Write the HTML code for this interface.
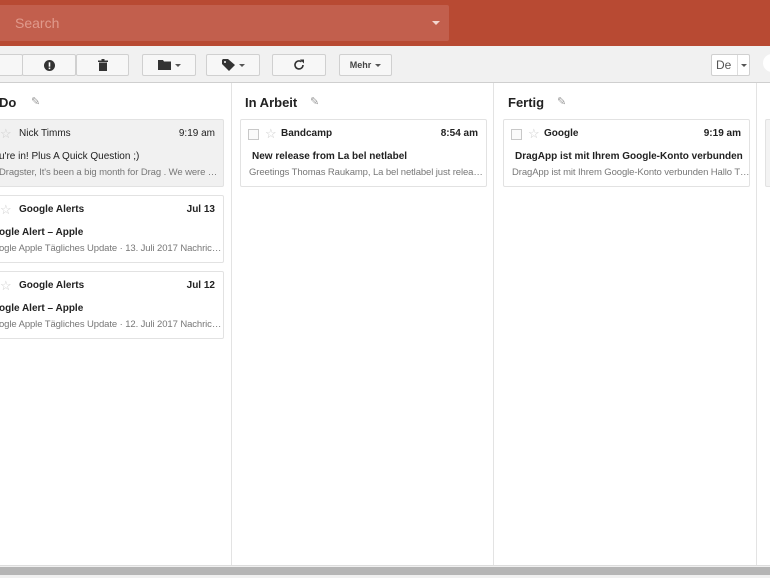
<!DOCTYPE html>
<html><head><style>
*{box-sizing:border-box;margin:0;padding:0}
body{width:770px;height:578px;overflow:hidden;background:#fff;font-family:"Liberation Sans",Arial,sans-serif;position:relative}
.hdr{position:absolute;left:0;top:0;width:770px;height:46px;background:#b84a33}
.search{position:absolute;left:-4px;top:5px;width:453px;height:36px;background:#c25f4d;border-radius:2px}
.search span{position:absolute;left:19px;top:10px;color:#e09a8c;font-size:14px}
.search i{position:absolute;right:9px;top:16px;border:4px solid transparent;border-top:4px solid #f3d6cf;border-bottom:0}
.tb{position:absolute;left:0;top:46px;width:770px;height:37px;background:#f1f1f1;border-bottom:1px solid #cfcfcf}
.btn{position:absolute;top:8px;height:22px;background:#f7f7f7;border:1px solid #d0d0d0;border-radius:2px;display:flex;align-items:center;justify-content:center;gap:4px;font-size:9px;font-weight:bold;color:#444}
.car{border:3px solid transparent;border-top:3px solid #555;border-bottom:0;display:inline-block}
.col{position:absolute;top:83px;height:482px;border-right:1px solid #e3e3e3}
.ct{position:absolute;top:95px;font-size:13px;font-weight:bold;color:#222}
.pen{position:absolute;top:95px;color:#999;font-size:11px}
.card{position:absolute;height:68px;border:1px solid #e2e2e2;border-radius:2px;background:#fff;font-size:10px}
.card .f{position:absolute;left:40px;top:8px;color:#222}
.card .t{position:absolute;right:8px;top:8px;color:#222}
.card .s{position:absolute;left:11px;top:31px;color:#222;font-weight:bold;white-space:nowrap}
.card .p{position:absolute;left:8px;top:47px;color:#777;white-space:nowrap;overflow:hidden;font-size:9.5px;letter-spacing:-0.1px}
.card .st{position:absolute;left:24px;top:6px;color:#ccc;font-size:13px}
.card .cb{position:absolute;left:7px;top:9px;width:11px;height:11px;border:1px solid #c8c8c8;background:#fafafa}
.b{font-weight:bold}
</style></head><body>
<div class="hdr"><div class="search"><span>Search</span><i></i></div></div>
<div class="tb">
 <div class="btn" style="left:-10px;width:33px"></div>
 <div class="btn" style="left:22px;width:54px"><svg width="11" height="11"><circle cx="5.5" cy="5.5" r="5.5" fill="#333"/><rect x="4.7" y="2.3" width="1.6" height="4.4" fill="#fff"/><rect x="4.7" y="7.6" width="1.6" height="1.5" fill="#fff"/></svg></div>
 <div class="btn" style="left:76px;width:53px"><svg width="10" height="12"><rect x="0" y="1.5" width="10" height="1.5" fill="#333"/><rect x="3.5" y="0" width="3" height="2" fill="#333"/><rect x="1" y="3.5" width="8" height="8.5" fill="#333"/></svg></div>
 <div class="btn" style="left:142px;width:54px"><svg width="13" height="10"><path d="M0 0h5l1 1.5h7V10H0z" fill="#333"/></svg><span class="car"></span></div>
 <div class="btn" style="left:206px;width:54px"><svg width="13" height="12"><path d="M0 1V5l7 7 6-6-7-6H1z" fill="#333"/><circle cx="3" cy="3" r="1" fill="#f7f7f7"/></svg><span class="car"></span></div>
 <div class="btn" style="left:272px;width:54px"><svg width="12" height="12"><path d="M10 6A4 4 0 1 1 8.5 2.8" fill="none" stroke="#333" stroke-width="1.6"/><path d="M7 0.5h4v4z" fill="#333"/></svg></div>
 <div class="btn" style="left:339px;width:53px">Mehr<span class="car"></span></div>
 <div class="btn" style="left:711px;width:39px;justify-content:flex-start;padding-left:4px;font-size:12px;font-weight:normal;color:#555;background:#fff">De<span style="position:absolute;left:25px;top:0;height:20px;border-left:1px solid #ddd"></span><span class="car" style="position:absolute;left:29px;top:9px"></span></div>
 <div style="position:absolute;left:763px;top:8px;width:20px;height:18px;border-radius:9px;background:#fff"></div>
</div>
<div class="col" style="left:0;width:232px"></div>
<div class="col" style="left:232px;width:262px"></div>
<div class="col" style="left:494px;width:263px"></div>
<div class="ct" style="left:-1px">Do</div><div class="pen" style="left:31px">✎</div>
<div class="ct" style="left:245px">In Arbeit</div><div class="pen" style="left:310px">✎</div>
<div class="ct" style="left:508px">Fertig</div><div class="pen" style="left:557px">✎</div>

<div class="card" style="left:-10px;top:119px;width:234px;background:#f1f1f1"><span class="st" style="left:9px">☆</span><span class="f" style="left:28px">Nick Timms</span><span class="t">9:19 am</span><span class="s" style="left:8px;font-weight:normal">u're in! Plus A Quick Question ;)</span><span class="p" style="left:8px">Dragster, It's been a big month for Drag . We were …</span></div>
<div class="card" style="left:-10px;top:195px;width:234px"><span class="st" style="left:9px">☆</span><span class="f b" style="left:28px">Google Alerts</span><span class="t b">Jul 13</span><span class="s" style="left:8px">ogle Alert – Apple</span><span class="p" style="left:8px">ogle Apple Tägliches Update · 13. Juli 2017 Nachric…</span></div>
<div class="card" style="left:-10px;top:271px;width:234px"><span class="st" style="left:9px">☆</span><span class="f b" style="left:28px">Google Alerts</span><span class="t b">Jul 12</span><span class="s" style="left:8px">ogle Alert – Apple</span><span class="p" style="left:8px">ogle Apple Tägliches Update · 12. Juli 2017 Nachric…</span></div>

<div class="card" style="left:240px;top:119px;width:247px"><span class="cb"></span><span class="st">☆</span><span class="f b">Bandcamp</span><span class="t b">8:54 am</span><span class="s">New release from La bel netlabel</span><span class="p">Greetings Thomas Raukamp, La bel netlabel just relea…</span></div>
<div class="card" style="left:503px;top:119px;width:247px"><span class="cb"></span><span class="st">☆</span><span class="f b">Google</span><span class="t b">9:19 am</span><span class="s">DragApp ist mit Ihrem Google-Konto verbunden</span><span class="p">DragApp ist mit Ihrem Google-Konto verbunden Hallo T…</span></div>
<div class="card" style="left:765px;top:119px;width:20px;background:#f3f3f3"></div>

<div style="position:absolute;left:0;top:565px;width:770px;height:13px;background:#f0f0f0;border-top:1px solid #ddd"></div>
<div style="position:absolute;left:0;top:567px;width:770px;height:8px;background:#b5b5b5"></div>
</body></html>
